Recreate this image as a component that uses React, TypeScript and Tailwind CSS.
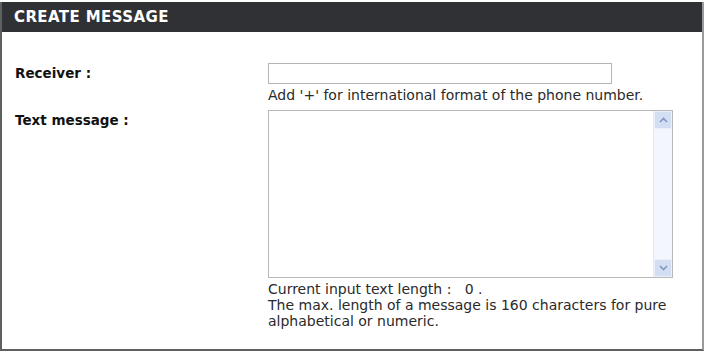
import React from "react";

function Chevron({ up }: { up?: boolean }) {
  return (
    <svg width="9" height="6" viewBox="0 0 9 6" className="block">
      <path
        d={up ? "M1 5 L4.5 1.5 L8 5" : "M1 1 L4.5 4.5 L8 1"}
        fill="none"
        stroke="#8196c0"
        strokeWidth="1.6"
      />
    </svg>
  );
}

export default function App() {
  return (
    <div
      className="w-[704px] h-[351px] bg-white pt-[2px] text-[14px] text-[#2a2a2a]"
      style={{ fontFamily: '"DejaVu Sans", sans-serif' }}
    >
      <div className="h-[349px] border-l-2 border-r-2 border-b-2 border-[#606060] border-r-[#9a9a9a] flex flex-col">
        <div className="h-[30px] bg-[#2f3134] flex items-center pl-[12px]">
          <span className="text-white font-bold text-[15px] tracking-[0.4px]">CREATE MESSAGE</span>
        </div>
        <div className="flex pt-[31px]">
          <div className="w-[266px] pl-[13px] font-bold text-[13.5px] text-[#111]">
            <div className="h-[47px]">Receiver :</div>
            <div>Text message :</div>
          </div>
          <div className="flex flex-col">
            <input
              className="w-[344px] h-[21px] border border-[#b4b4b4] outline-none"
              type="text"
            />
            <div className="mt-[3px] leading-[17px]">
              Add '+' for international format of the phone number.
            </div>
            <div className="mt-[6px] w-[405px] h-[168px] border border-[#b8b8b8] flex">
              <textarea className="flex-1 resize-none outline-none overflow-hidden" />
              <div className="w-[19px] bg-[#f3f6fc] border-l border-[#e4e9f4] flex flex-col justify-between">
                <div className="h-[18px] bg-[#d3def3] border border-[#eaf0fa] flex items-center justify-center">
                  <Chevron up />
                </div>
                <div className="h-[18px] bg-[#d3def3] border border-[#eaf0fa] flex items-center justify-center">
                  <Chevron />
                </div>
              </div>
            </div>
            <div className="mt-[3px] leading-[16px] w-[405px]">
              <div>Current input text length :&nbsp;&nbsp; 0 .</div>
              <div>
                The max. length of a message is 160 characters for pure alphabetical or numeric.
              </div>
            </div>
          </div>
        </div>
      </div>
    </div>
  );
}
